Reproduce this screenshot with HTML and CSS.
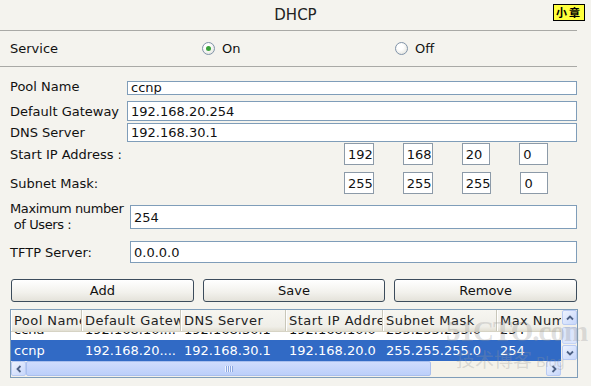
FILE: index.html
```html
<!DOCTYPE html>
<html>
<head>
<meta charset="utf-8">
<link rel="stylesheet" href="styles.css">
</head>
<body>
<div class="panel">
  <div class="title">DHCP<span class="badge">小章</span></div>
  <div class="service">
    <span class="slbl">Service</span>
    <span class="radio"><span class="circle on"></span>On</span>
    <span class="radio"><span class="circle"></span>Off</span>
  </div>

  <div class="row r-pool"><span class="lbl">Pool Name</span><div class="field">ccnp</div></div>
  <div class="row r-gw"><span class="lbl">Default Gateway</span><div class="field">192.168.20.254</div></div>
  <div class="row r-dns"><span class="lbl">DNS Server</span><div class="field">192.168.30.1</div></div>
  <div class="row r-start"><span class="lbl wide">Start IP Address :</span>
    <div class="oct">192</div><div class="oct">168</div><div class="oct">20</div><div class="oct">0</div>
  </div>
  <div class="row r-mask"><span class="lbl wide">Subnet Mask:</span>
    <div class="oct">255</div><div class="oct">255</div><div class="oct">255</div><div class="oct">0</div>
  </div>
  <div class="row r-max"><span class="lbl lbl2">Maximum number<br>&nbsp;of Users :</span><div class="field">254</div></div>
  <div class="row r-tftp"><span class="lbl lbl3">TFTP Server:</span><div class="field">0.0.0.0</div></div>

  <div class="buttons">
    <div class="btn">Add</div>
    <div class="btn">Save</div>
    <div class="btn">Remove</div>
  </div>

  <div class="table">
    <div class="main">
      <div class="thead">
        <div class="c c1">Pool Name</div>
        <div class="c c2">Default Gateway</div>
        <div class="c c3">DNS Server</div>
        <div class="c c4">Start IP Address</div>
        <div class="c c5">Subnet Mask</div>
        <div class="c c6">Max Number</div>
      </div>
      <div class="body">
        <div class="rows">
          <div class="tr">
            <div class="c c1">ccna</div>
            <div class="c c2">192.168.10....</div>
            <div class="c c3">192.168.30.1</div>
            <div class="c c4">192.168.10.0</div>
            <div class="c c5">255.255.255.0</div>
            <div class="c c6">254</div>
          </div>
          <div class="tr sel">
            <div class="c c1">ccnp</div>
            <div class="c c2">192.168.20....</div>
            <div class="c c3">192.168.30.1</div>
            <div class="c c4">192.168.20.0</div>
            <div class="c c5">255.255.255.0</div>
            <div class="c c6">254</div>
          </div>
        </div>
      </div>
      <div class="hscroll">
        <div class="sbtn"><svg width="8" height="8" viewBox="0 0 8 8"><path d="M5.5 1 L2.5 4 L5.5 7" fill="none" stroke="#4d6185" stroke-width="1.8"/></svg></div>
        <div class="thumb"><span class="grip"></span></div>
        <div class="track"></div>
        <div class="sbtn"><svg width="8" height="8" viewBox="0 0 8 8"><path d="M2.5 1 L5.5 4 L2.5 7" fill="none" stroke="#4d6185" stroke-width="1.8"/></svg></div>
      </div>
    </div>
    <div class="vcol">
      <div class="vscroll">
        <div class="sbtn"><svg width="8" height="8" viewBox="0 0 8 8"><path d="M1 5.5 L4 2.5 L7 5.5" fill="none" stroke="#4d6185" stroke-width="1.8"/></svg></div>
        <div class="vtrack"><div class="vthumb"></div></div>
        <div class="sbtn"><svg width="8" height="8" viewBox="0 0 8 8"><path d="M1 2.5 L4 5.5 L7 2.5" fill="none" stroke="#4d6185" stroke-width="1.8"/></svg></div>
      </div>
      <div class="corner"></div>
    </div>
  </div>

  <div class="watermark"><div class="wm1">51CTO.com</div><div class="wm2">技术博客 <span>Blog</span></div></div>
</div>
</body>
</html>
```
FILE: styles.css
```css
body {
  margin: 0;
  background: #f4f3ee;
  font-family: "DejaVu Sans", Verdana, sans-serif;
  font-size: 13px;
  color: #111;
}
.panel {
  width: 577px;
  position: relative;
  height: 386px;
}
.title {
  height: 30px;
  border-bottom: 1px solid #a9a9a6;
  display: flex;
  align-items: center;
  justify-content: center;
  font-size: 15px;
  color: #222;
  padding-left: 14px;
}
.badge {
  position: absolute;
  left: 553px;
  top: 4px;
  width: 30px;
  height: 15px;
  background: #ffff3c;
  border: 1px solid #000;
  font-family: "Noto Sans CJK SC", sans-serif;
  font-weight: bold;
  font-size: 11px;
  line-height: 15px;
  text-align: center;
  letter-spacing: 2px;
  color: #000;
}
.service {
  height: 35px;
  border-bottom: 1px solid #a9a9a6;
  display: flex;
  align-items: center;
  padding-left: 10px;
}
.slbl { width: 192px; flex: none; }
.radio {
  width: 193px;
  flex: none;
  display: flex;
  align-items: center;
  gap: 7px;
}
.circle {
  width: 11px;
  height: 11px;
  flex: none;
  border: 1px solid #8194aa;
  border-radius: 50%;
  background: radial-gradient(circle at 40% 35%, #ffffff 30%, #dcdcd3 100%);
  display: flex;
  align-items: center;
  justify-content: center;
}
.circle.on::after {
  content: "";
  width: 5px;
  height: 5px;
  border-radius: 50%;
  background: #3aa23a;
}
.row {
  display: flex;
  align-items: center;
  padding-left: 10px;
}
.lbl { width: 117px; flex: none; white-space: nowrap; }
.lbl.wide { width: 334px; }
.lbl.lbl2 { width: 120px; line-height: 16px; letter-spacing: -0.4px; }
.lbl.lbl3 { width: 120px; }
.field {
  flex: 1;
  box-sizing: border-box;
  border: 1px solid #7f9db9;
  background: #fff;
  padding-left: 3px;
  display: flex;
  align-items: center;
  white-space: nowrap;
  overflow: hidden;
}
.r-pool { margin-top: 14px; height: 14px; }
.r-pool .lbl { margin-top: -4px; }
.r-pool .field { height: 14px; align-items: flex-end; line-height: 13px; }
.r-gw { margin-top: 6px; }
.r-gw .field { height: 20px; }
.r-dns { margin-top: 2px; }
.r-dns .field { height: 19px; }
.r-start { margin-top: 1px; }
.r-mask { margin-top: 7px; }
.oct {
  width: 30px;
  height: 22px;
  box-sizing: border-box;
  border: 1px solid #8c9aa8;
  background: #fff;
  padding-left: 3px;
  display: flex;
  align-items: center;
  margin-right: 29px;
}
.r-max { margin-top: 11px; height: 24px; }
.r-max .field { height: 24px; }
.r-tftp { margin-top: 12px; }
.r-tftp .field { height: 22px; }
.buttons {
  margin: 16px 0 0 11px;
  display: grid;
  grid-template-columns: 1fr 1fr 1fr;
  gap: 9px;
}
.btn {
  height: 23px;
  box-sizing: border-box;
  border: 1px solid #3c4c5c;
  border-radius: 3px;
  background: linear-gradient(#ffffff, #f2f1ec 60%, #e4e2da);
  display: flex;
  align-items: center;
  justify-content: center;
  color: #111;
}
.table {
  margin: 7px 0 0 10px;
  width: 568px;
  box-sizing: border-box;
  border: 1px solid #7f9db9;
  display: flex;
  background: #fff;
}
.main { width: 550px; flex: none; }
.thead {
  height: 22px;
  display: flex;
  background: linear-gradient(#f7f6f1, #efeee8 80%, #e2dfd2);
  border-bottom: 1px solid #d6d3c4;
  box-sizing: border-box;
}
.c {
  overflow: hidden;
  white-space: nowrap;
  padding-left: 3px;
  box-sizing: border-box;
  flex: none;
}
.thead .c {
  line-height: 21px;
  border-right: 1px solid #c9c7ba;
  box-shadow: inset 1px 0 0 #fff;
  color: #222;
  letter-spacing: 0.45px;
}
.thead .c6 { border-right: none; }
.c1 { width: 71px; }
.c2 { width: 99px; }
.c3 { width: 105px; }
.c4 { width: 97px; }
.c5 { width: 114px; }
.c6 { width: 64px; }
.body {
  height: 29px;
  overflow: hidden;
}
.rows { margin-top: -13px; }
.tr {
  display: flex;
  height: 21px;
  line-height: 21px;
}
.tr.sel {
  background: #316ac5;
  color: #fff;
}
.hscroll {
  height: 16px;
  display: flex;
  background: #f3f1ea;
}
.sbtn {
  width: 15px;
  height: 15px;
  box-sizing: border-box;
  border: 1px solid #b9cbf3;
  border-radius: 2px;
  background: linear-gradient(135deg, #eef3fe, #c6d6fb);
  display: flex;
  align-items: center;
  justify-content: center;
  flex: none;
  margin: 0 0 1px 0;
}
.thumb {
  width: 405px;
  box-sizing: border-box;
  border: 1px solid #a9bfee;
  border-radius: 2px;
  background: linear-gradient(#cfdcfd, #bccffa);
  display: flex;
  align-items: center;
  justify-content: center;
  margin-bottom: 1px;
}
.grip {
  width: 8px;
  height: 6px;
  background: repeating-linear-gradient(90deg, #eef3ff 0 1px, #8ca7e0 1px 2px);
}
.track { flex: 1; background: #f4f2ea; }
.vcol { width: 16px; flex: none; display: flex; flex-direction: column; }
.vscroll {
  height: 51px;
  display: flex;
  flex-direction: column;
  background: #f3f1ea;
  padding-left: 1px;
}
.vtrack { flex: 1; padding: 1px 0; display: flex; }
.vthumb {
  width: 15px;
  box-sizing: border-box;
  border: 1px solid #c5d4f5;
  background: #dbe5fc;
  border-radius: 2px;
}
.corner { flex: 1; background: #f4f3ee; }
.watermark {
  position: absolute;
  left: 446px;
  top: 316px;
  color: rgba(150, 150, 150, 0.3);
  pointer-events: none;
  font-family: "Liberation Serif", serif;
}
.wm1 {
  font-size: 29px;
  font-weight: bold;
  line-height: 30px;
  letter-spacing: -1px;
}
.wm2 {
  font-family: "Noto Sans CJK SC", sans-serif;
  font-size: 19px;
  line-height: 26px;
  padding-left: 10px;
}
.wm2 span { font-family: "Liberation Sans", sans-serif; font-size: 14px; }
```
